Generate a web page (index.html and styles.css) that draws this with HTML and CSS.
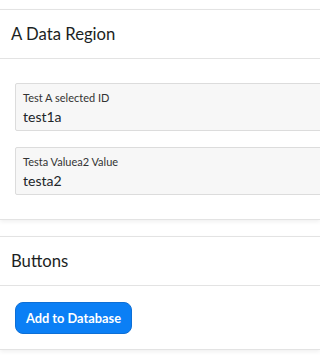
FILE: index.html
```html
<!DOCTYPE html>
<html>
<head>
<meta charset="utf-8">
<link rel="stylesheet" href="styles.css">
</head>
<body>
<div class="page">
  <section class="card">
    <div class="card-header">A Data Region</div>
    <div class="card-body data-body">
      <div class="field">
        <div class="field-label">Test A selected ID</div>
        <div class="field-value">test1a</div>
      </div>
      <div class="field">
        <div class="field-label">Testa Valuea2 Value</div>
        <div class="field-value">testa2</div>
      </div>
    </div>
  </section>
  <section class="card">
    <div class="card-header">Buttons</div>
    <div class="card-body button-body">
      <button class="btn-primary">Add to Database</button>
    </div>
  </section>
</div>
</body>
</html>
```
FILE: styles.css
```css
html, body {
  margin: 0;
  padding: 0;
  background: #ffffff;
}
body {
  font-family: "Lato", "Noto Sans", sans-serif;
  color: #212529;
}
.page {
  overflow: hidden;
  padding-top: 9px;
  padding-bottom: 6px;
  display: flex;
  flex-direction: column;
  gap: 16px;
}
.card {
  background: #fff;
  border-top: 1px solid #e3e3e3;
  border-bottom: 1px solid #e3e3e3;
  box-shadow: 0 2px 4px rgba(0, 0, 0, 0.06);
}
.card-header {
  height: 48px;
  line-height: 48px;
  padding-left: 11px;
  font-size: 16.7px;
  border-bottom: 1px solid #e3e3e3;
  color: #1c1f23;
}
.data-body {
  padding: 24px 0 24px 15px;
  display: flex;
  flex-direction: column;
  gap: 16px;
}
.field {
  background: #f7f7f7;
  border: 1px solid #dcdcdc;
  border-radius: 2px;
  padding: 7px 0 0 7px;
  box-sizing: border-box;
  height: 48px;
  margin-right: -20px;
}
.field-label {
  font-size: 11px;
  line-height: 14px;
  color: #333;
}
.field-value {
  font-size: 14px;
  line-height: 23px;
  color: #212529;
}
.button-body {
  padding: 16px 15px 15px;
}
.btn-primary {
  font-family: "Lato", "Noto Sans", sans-serif;
  font-weight: bold;
  font-size: 12.8px;
  color: #fff;
  background: #0b7ff5;
  border: 1px solid #0d6fd6;
  border-radius: 8px;
  width: 117px;
  height: 32px;
  padding: 0;
  margin: 0;
  display: block;
}
```
